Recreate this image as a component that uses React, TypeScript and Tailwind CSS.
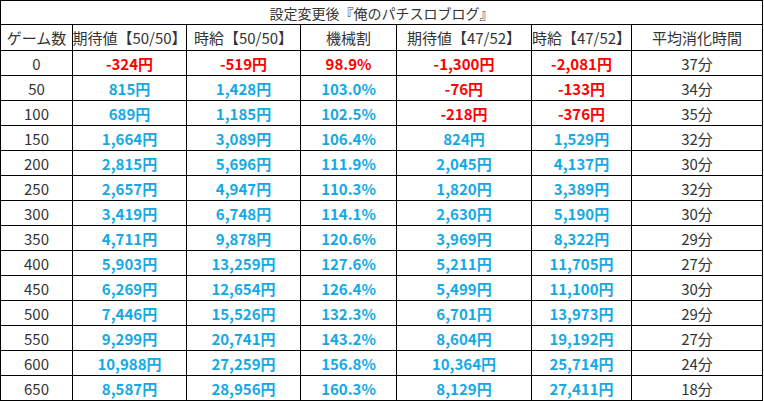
import React from 'react';

type Row = [string, string, string, string, string, string, string];

const rows: Row[] = [
  ['0', '-324円', '-519円', '98.9%', '-1,300円', '-2,081円', '37分'],
  ['50', '815円', '1,428円', '103.0%', '-76円', '-133円', '34分'],
  ['100', '689円', '1,185円', '102.5%', '-218円', '-376円', '35分'],
  ['150', '1,664円', '3,089円', '106.4%', '824円', '1,529円', '32分'],
  ['200', '2,815円', '5,696円', '111.9%', '2,045円', '4,137円', '30分'],
  ['250', '2,657円', '4,947円', '110.3%', '1,820円', '3,389円', '32分'],
  ['300', '3,419円', '6,748円', '114.1%', '2,630円', '5,190円', '30分'],
  ['350', '4,711円', '9,878円', '120.6%', '3,969円', '8,322円', '29分'],
  ['400', '5,903円', '13,259円', '127.6%', '5,211円', '11,705円', '27分'],
  ['450', '6,269円', '12,654円', '126.4%', '5,499円', '11,100円', '30分'],
  ['500', '7,446円', '15,526円', '132.3%', '6,701円', '13,973円', '29分'],
  ['550', '9,299円', '20,741円', '143.2%', '8,604円', '19,192円', '27分'],
  ['600', '10,988円', '27,259円', '156.8%', '10,364円', '25,714円', '24分'],
  ['650', '8,587円', '28,956円', '160.3%', '8,129円', '27,411円', '18分'],
];

const headers = ['ゲーム数', '期待値【50/50】', '時給【50/50】', '機械割', '期待値【47/52】', '時給【47/52】', '平均消化時間'];

const gridCols = 'grid grid-cols-[72px_114px_114px_96px_135px_100px_131px]';

// negative yen and a payout under 100% are shown in red
const isRed = (v: string) => v.startsWith('-') || (v.endsWith('%') && parseFloat(v) < 100);

const App = () => {
  return (
    <div
      className="w-[763px] bg-white text-[#333333] border-l border-t border-black"
      style={{ fontFamily: '"Noto Sans CJK JP", "Noto Sans", sans-serif' }}
    >
      <div className="h-[24px] border-r border-b border-black flex items-center justify-center text-[14px] leading-none">
        設定変更後『俺のパチスロブログ』
      </div>
      <div className={`${gridCols} h-[26px]`}>
        {headers.map((h, i) => (
          <div
            key={i}
            className="border-r border-b border-black flex items-center justify-center text-[15px] leading-none whitespace-nowrap"
          >
            {h}
          </div>
        ))}
      </div>
      {rows.map((r) => (
        <div key={r[0]} className={`${gridCols} h-[25px]`}>
          {r.map((v, i) => {
            const plain = i === 0 || i === 6;
            return (
              <div
                key={i}
                className={
                  'border-r border-b border-black flex items-center justify-center text-[15px] leading-none ' +
                  (plain ? 'font-normal' : isRed(v) ? 'font-bold text-[#ff0000]' : 'font-bold text-[#14a9e4]')
                }
              >
                {v}
              </div>
            );
          })}
        </div>
      ))}
    </div>
  );
};

export default App;
